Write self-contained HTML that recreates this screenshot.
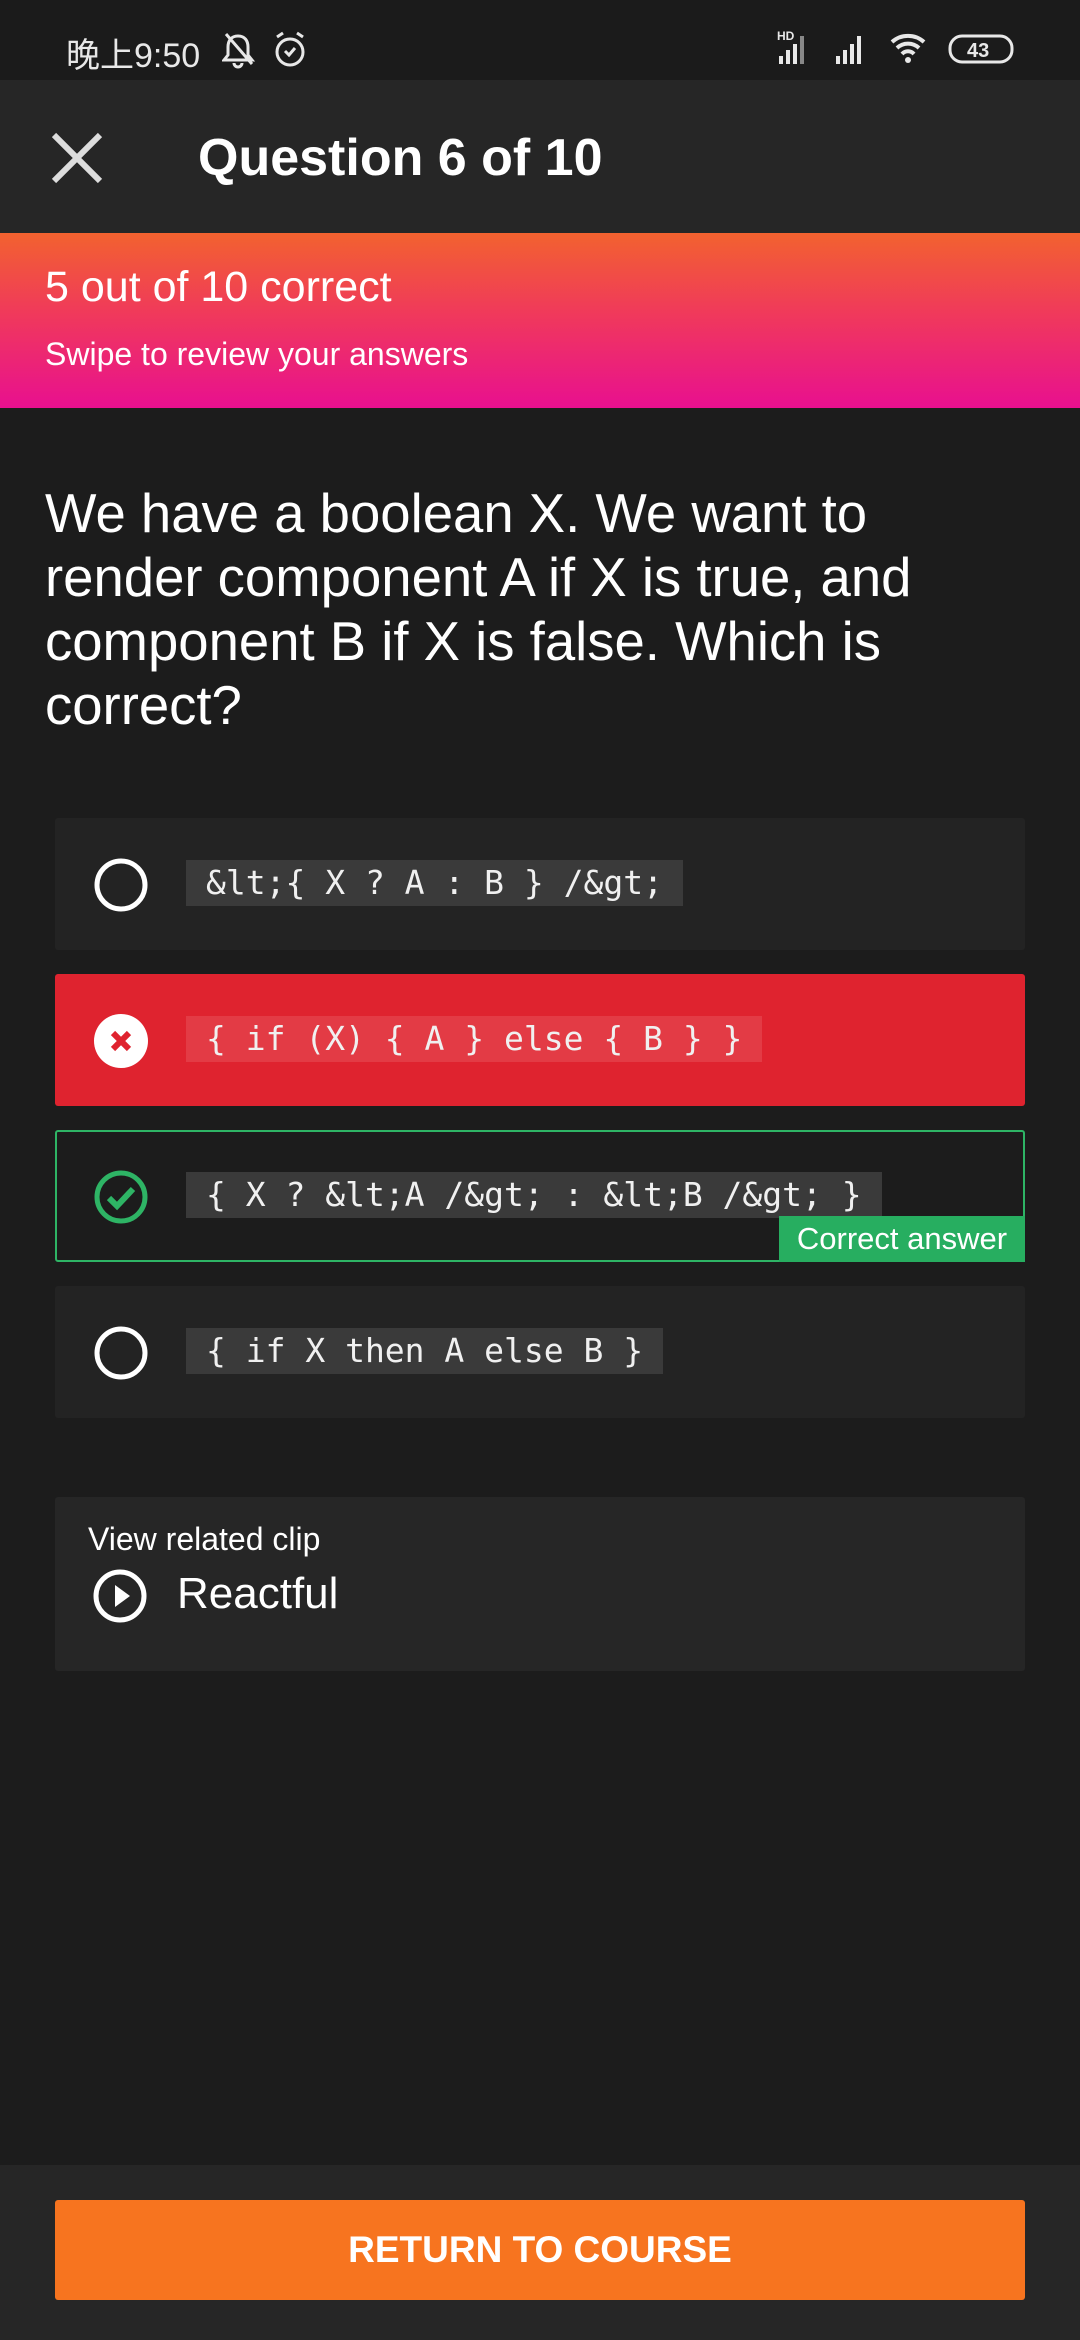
<!DOCTYPE html>
<html><head><meta charset="utf-8"><style>
*{margin:0;padding:0;box-sizing:border-box}
body{width:1080px;height:2340px;background:#1c1c1c;font-family:"Liberation Sans","Noto Sans CJK SC",sans-serif;color:#fff;position:relative;overflow:hidden}
.abs{position:absolute}
.status{left:0;top:0;width:1080px;height:80px;background:#1b1b1b}
.header{left:0;top:80px;width:1080px;height:153px;background:#262626}
.banner{left:0;top:233px;width:1080px;height:175px;background:linear-gradient(#f2622f,#f03a5a 45%,#e8108f)}
.q{left:45px;top:482px;width:1030px;font-size:54.5px;line-height:64px;white-space:nowrap}
.opt{left:55px;width:970px;height:132px;background:#232323;border-radius:3px}
.code{position:absolute;left:131px;top:42px;height:46px;background:#3a3a3a;font-family:"DejaVu Sans Mono","Liberation Mono",monospace;font-size:33px;line-height:46px;padding:0 20px;white-space:pre;color:#f0f0f0}
.ic{position:absolute;left:38px;top:39px}
</style></head><body>
<div class="abs status">
 <div class="abs" style="left:66px;top:28px;font-size:34px;color:#e8e8e8">晚上9:50</div>
 <svg class="abs" style="left:222px;top:30px" width="90" height="40" viewBox="0 0 90 40"><path d="M16 6c-7 0-10 5-10 11v8l-4 5h28l-4-5v-8c0-6-3-11-10-11zM12 33a4 4 0 008 0M4 4l26 30" stroke="#e8e8e8" stroke-width="3" fill="none"/><circle cx="68" cy="22" r="13" stroke="#e8e8e8" stroke-width="3" fill="none"/><path d="M63 21l4 4 6-7M55 7l6-4M81 7l-6-4" stroke="#e8e8e8" stroke-width="3" fill="none"/></svg>
 <svg class="abs" style="left:775px;top:28px" width="240" height="40" viewBox="0 0 240 40"><text x="2" y="12" font-size="12" fill="#e8e8e8" font-weight="bold" font-family="Liberation Sans">HD</text><rect x="4" y="28" width="4" height="8" fill="#e8e8e8"/><rect x="11" y="22" width="4" height="14" fill="#e8e8e8"/><rect x="18" y="16" width="4" height="20" fill="#e8e8e8"/><rect x="25" y="8" width="4" height="28" fill="#888"/><rect x="61" y="28" width="4" height="8" fill="#e8e8e8"/><rect x="68" y="22" width="4" height="14" fill="#e8e8e8"/><rect x="75" y="16" width="4" height="20" fill="#e8e8e8"/><rect x="82" y="8" width="4" height="28" fill="#e8e8e8"/><path d="M117 14a24 24 0 0132 0M122 20a16 16 0 0122 0M127 26a8 8 0 0112 0" stroke="#e8e8e8" stroke-width="4" fill="none"/><circle cx="133" cy="32" r="3" fill="#e8e8e8"/><rect x="175" y="8" width="62" height="26" rx="12" stroke="#e8e8e8" stroke-width="3" fill="none"/><text x="192" y="29" font-size="20" font-weight="bold" fill="#e8e8e8" font-family="Liberation Sans">43</text></svg>
</div>
<div class="abs header">
 <svg class="abs" style="left:50px;top:51px" width="54" height="54" viewBox="0 0 54 54"><path d="M4 4l46 46M50 4L4 50" stroke="#ddd" stroke-width="6"/></svg>
 <div class="abs" style="left:198px;top:48px;font-size:52px;font-weight:bold">Question 6 of 10</div>
</div>
<div class="abs banner">
 <div class="abs" style="left:45px;top:30px;font-size:43px">5 out of 10 correct</div>
 <div class="abs" style="left:45px;top:103px;font-size:32px">Swipe to review your answers</div>
</div>
<div class="abs q">We have a boolean X. We want to<br>render component A if X is true, and<br>component B if X is false. Which is<br>correct?</div>

<div class="abs opt" style="top:818px">
 <svg class="ic" width="56" height="56"><circle cx="28" cy="28" r="24" stroke="#fff" stroke-width="5" fill="none"/></svg>
 <div class="code">&amp;lt;{ X ? A : B } /&amp;gt;</div>
</div>
<div class="abs opt" style="top:974px;background:#df232f">
 <svg class="ic" width="56" height="56"><circle cx="28" cy="28" r="27" fill="#fff"/><path d="M20 20l16 16M36 20L20 36" stroke="#df232f" stroke-width="6"/></svg>
 <div class="code" style="background:#e33b45">{ if (X) { A } else { B } }</div>
</div>
<div class="abs opt" style="top:1130px;background:#1c1c1c;border:2px solid #2eb465">
 <svg class="ic" style="left:36px;top:37px" width="56" height="56"><circle cx="28" cy="28" r="24" stroke="#2eb465" stroke-width="5" fill="none"/><path d="M16 29l8 8 16-17" stroke="#2eb465" stroke-width="6" fill="none"/></svg>
 <div class="code" style="left:129px;top:40px">{ X ? &amp;lt;A /&amp;gt; : &amp;lt;B /&amp;gt; }</div>
 <div class="abs" style="right:-2px;bottom:-2px;width:246px;height:46px;background:#27ae60;font-size:31px;line-height:46px;text-align:center">Correct answer</div>
</div>
<div class="abs opt" style="top:1286px">
 <svg class="ic" width="56" height="56"><circle cx="28" cy="28" r="24" stroke="#fff" stroke-width="5" fill="none"/></svg>
 <div class="code">{ if X then A else B }</div>
</div>

<div class="abs opt" style="top:1497px;height:174px;background:#262626">
 <div class="abs" style="left:33px;top:24px;font-size:32px">View related clip</div>
 <svg class="abs" style="left:38px;top:71px" width="56" height="56"><circle cx="27" cy="28" r="24" stroke="#fff" stroke-width="5" fill="none"/><path d="M22 17v22l15-11z" fill="#fff"/></svg>
 <div class="abs" style="left:122px;top:72px;font-size:44px">Reactful</div>
</div>

<div class="abs" style="left:0;top:2165px;width:1080px;height:175px;background:#262626">
 <div class="abs" style="left:55px;top:35px;width:970px;height:100px;background:#f7741f;border-radius:3px;font-size:37px;font-weight:bold;line-height:100px;text-align:center">RETURN TO COURSE</div>
</div>
</body></html>
